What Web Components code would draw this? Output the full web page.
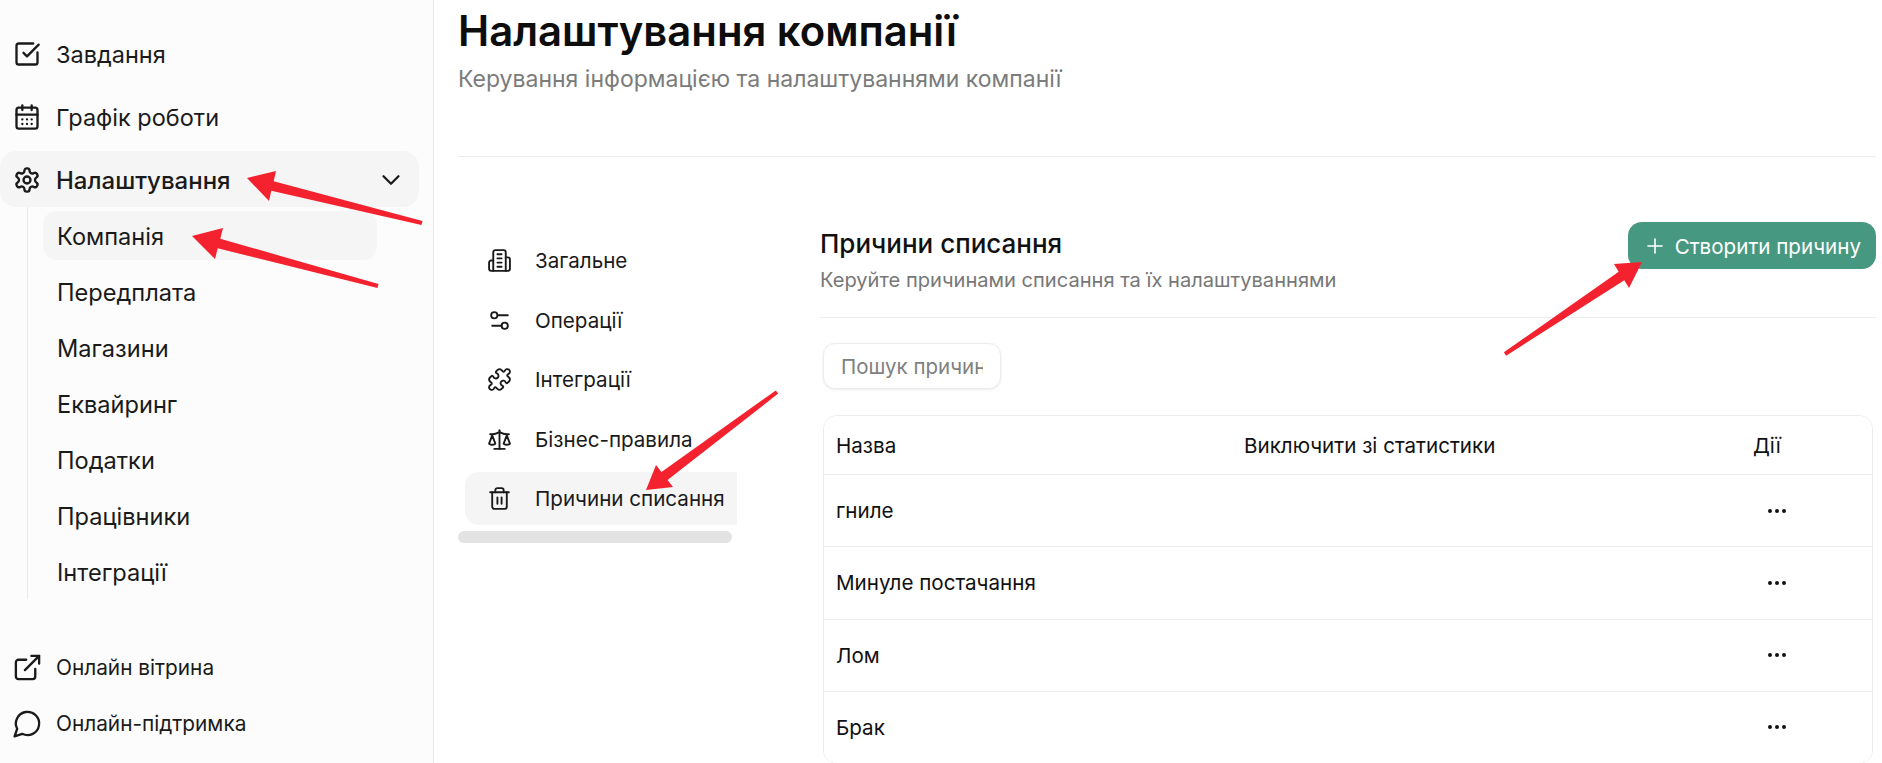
<!DOCTYPE html>
<html lang="uk">
<head>
<meta charset="utf-8">
<title>Налаштування компанії</title>
<style>
  html, body { margin: 0; height: 763px; overflow: hidden; background: #fff; }
  body { font-family: Inter, "Noto Sans", sans-serif; color: #111; }
</style>
</head>
<body>
<settings-page>
  <side-nav slot="side">
    <nav-item icon="check">Завдання</nav-item>
    <nav-item icon="calendar">Графік роботи</nav-item>
    <nav-item icon="gear" active>Налаштування</nav-item>
    <nav-group>
      <sub-item active>Компанія</sub-item>
      <sub-item>Передплата</sub-item>
      <sub-item>Магазини</sub-item>
      <sub-item>Еквайринг</sub-item>
      <sub-item>Податки</sub-item>
      <sub-item>Працівники</sub-item>
      <sub-item>Інтеграції</sub-item>
    </nav-group>
    <nav-item slot="bottom" icon="link" small>Онлайн вітрина</nav-item>
    <nav-item slot="bottom" icon="chat" small>Онлайн-підтримка</nav-item>
  </side-nav>

  <page-header slot="head" subtitle="Керування інформацією та налаштуваннями компанії">Налаштування компанії</page-header>

  <settings-tabs slot="tabs">
    <tab-item icon="building">Загальне</tab-item>
    <tab-item icon="sliders">Операції</tab-item>
    <tab-item icon="puzzle">Інтеграції</tab-item>
    <tab-item icon="scale">Бізнес-правила</tab-item>
    <tab-item icon="trash" active>Причини списання</tab-item>
  </settings-tabs>

  <reasons-panel slot="panel">
    <reason-row head>
      <span>Назва</span><span slot="flag">Виключити зі статистики</span><span slot="act">Дії</span>
    </reason-row>
    <reason-row><span>гниле</span></reason-row>
    <reason-row><span>Минуле постачання</span></reason-row>
    <reason-row><span>Лом</span></reason-row>
    <reason-row last><span>Брак</span></reason-row>
  </reasons-panel>
</settings-page>
<arrow-layer></arrow-layer>

<script>
const ICONS = {
  check: '<path d="M21 10.656V19a2 2 0 0 1-2 2H5a2 2 0 0 1-2-2V5a2 2 0 0 1 2-2h12.344"/><path d="m9 11 3 3L22 4"/>',
  calendar: '<path d="M8 2v4M16 2v4"/><rect x="3" y="4" width="18" height="18" rx="2"/><path d="M3 10h18M8 14h.01M12 14h.01M16 14h.01M8 18h.01M12 18h.01M16 18h.01"/>',
  gear: '<path d="M12.22 2h-.44a2 2 0 0 0-2 2v.18a2 2 0 0 1-1 1.73l-.43.25a2 2 0 0 1-2 0l-.15-.08a2 2 0 0 0-2.73.73l-.22.38a2 2 0 0 0 .73 2.73l.15.1a2 2 0 0 1 1 1.72v.51a2 2 0 0 1-1 1.74l-.15.09a2 2 0 0 0-.73 2.73l.22.38a2 2 0 0 0 2.73.73l.15-.08a2 2 0 0 1 2 0l.43.25a2 2 0 0 1 1 1.73V20a2 2 0 0 0 2 2h.44a2 2 0 0 0 2-2v-.18a2 2 0 0 1 1-1.73l.43-.25a2 2 0 0 1 2 0l.15.08a2 2 0 0 0 2.73-.73l.22-.39a2 2 0 0 0-.73-2.73l-.15-.08a2 2 0 0 1-1-1.74v-.5a2 2 0 0 1 1-1.74l.15-.09a2 2 0 0 0 .73-2.73l-.22-.38a2 2 0 0 0-2.73-.73l-.15.08a2 2 0 0 1-2 0l-.43-.25a2 2 0 0 1-1-1.73V4a2 2 0 0 0-2-2z"/><circle cx="12" cy="12" r="3"/>',
  link: '<path d="M18 13v6a2 2 0 0 1-2 2H5a2 2 0 0 1-2-2V8a2 2 0 0 1 2-2h6"/><path d="M15 3h6v6"/><path d="M10 14 21 3"/>',
  chat: '<path d="M7.9 20A9 9 0 1 0 4 16.1L2 22Z"/>',
  chevron: '<path d="m6 9 6 6 6-6"/>',
  building: '<path d="M6 22V4a2 2 0 0 1 2-2h8a2 2 0 0 1 2 2v18Z"/><path d="M6 12H4a2 2 0 0 0-2 2v6a2 2 0 0 0 2 2h2"/><path d="M18 9h2a2 2 0 0 1 2 2v9a2 2 0 0 1-2 2h-2"/><path d="M10 6h4M10 10h4M10 14h4M10 18h4"/>',
  sliders: '<path d="M20 7h-9"/><path d="M14 17H5"/><circle cx="17" cy="17" r="3"/><circle cx="7" cy="7" r="3"/>',
  puzzle: '<path d="M19.439 7.85c-.049.322.059.648.289.878l1.568 1.568c.47.47.706 1.087.706 1.704s-.235 1.233-.706 1.704l-1.611 1.611a.98.98 0 0 1-.837.276c-.47-.07-.802-.48-.968-.925a2.501 2.501 0 1 0-3.214 3.214c.446.166.855.497.925.968a.979.979 0 0 1-.276.837l-1.61 1.61a2.404 2.404 0 0 1-1.705.707 2.402 2.402 0 0 1-1.704-.706l-1.568-1.568a1.026 1.026 0 0 0-.877-.29c-.493.074-.84.504-1.02.968a2.5 2.5 0 1 1-3.237-3.237c.464-.18.894-.527.967-1.02a1.026 1.026 0 0 0-.289-.877l-1.568-1.568A2.402 2.402 0 0 1 1.998 12c0-.617.236-1.234.706-1.704L4.23 8.77c.24-.24.581-.353.917-.303.515.077.877.528 1.073 1.01a2.5 2.5 0 1 0 3.259-3.259c-.482-.196-.933-.558-1.01-1.073-.05-.336.062-.676.303-.917l1.525-1.525A2.402 2.402 0 0 1 12 1.998c.617 0 1.234.236 1.704.706l1.568 1.568c.23.23.556.338.877.29.493-.074.84-.504 1.02-.968a2.5 2.5 0 1 1 3.237 3.237c-.464.18-.894.527-.967 1.02Z"/>',
  scale: '<path d="m16 16 3-8 3 8c-.87.65-1.92 1-3 1s-2.13-.35-3-1Z"/><path d="m2 16 3-8 3 8c-.87.65-1.92 1-3 1s-2.13-.35-3-1Z"/><path d="M7 21h10"/><path d="M12 3v18"/><path d="M3 7h2c2 0 5-1 7-2 2 1 5 2 7 2h2"/>',
  trash: '<path d="M3 6h18"/><path d="M19 6v14c0 1-1 2-2 2H7c-1 0-2-1-2-2V6"/><path d="M8 6V4c0-1 1-2 2-2h4c1 0 2 1 2 2v2"/><path d="M10 11v6M14 11v6"/>',
  plus: '<path d="M5 12h14"/><path d="M12 5v14"/>',
  dots: '<circle cx="12" cy="12" r="1"/><circle cx="19" cy="12" r="1"/><circle cx="5" cy="12" r="1"/>'
}

function icon(name, size, width) {
  return `<svg xmlns="http://www.w3.org/2000/svg" width="${size}" height="${size}" viewBox="0 0 24 24" fill="none" stroke="currentColor" stroke-width="${width || 2}" stroke-linecap="round" stroke-linejoin="round" style="flex:none;display:block">${ICONS[name]}</svg>`
}

// small helper, every element below is just markup + style in an open root
function define(tag, render) {
  customElements.define(tag, class extends HTMLElement {
    constructor() {
      super()
      this.attachShadow({mode: 'open'})
    }
    connectedCallback() {
      this.shadowRoot.innerHTML = render(this)
    }
  })
}

define('settings-page', () => `
  <style>
    :host { display: grid; grid-template-columns: 434px 1fr; height: 763px; overflow: hidden; }
    .main { padding: 0 6px 0 24px; min-width: 0; }
    .body { display: flex; padding-top: 65px; }
    .tabs { width: 362px; flex: none; }
    .panel { flex: 1; min-width: 0; }
  </style>
  <slot name="side"></slot>
  <div class="main">
    <slot name="head"></slot>
    <div class="body">
      <div class="tabs"><slot name="tabs"></slot></div>
      <div class="panel"><slot name="panel"></slot></div>
    </div>
  </div>
`)

define('side-nav', () => `
  <style>
    :host { display: flex; flex-direction: column; height: 763px; box-sizing: border-box; padding-top: 25px; background: #fcfcfc; border-right: 1px solid #e9e9e9; }
    .top { display: flex; flex-direction: column; }
    .bottom { display: flex; flex-direction: column; margin-top: 39px; }
  </style>
  <div class="top"><slot></slot></div>
  <div class="bottom"><slot name="bottom"></slot></div>
`)

define('nav-item', el => {
  const active = el.hasAttribute('active')
  const small = el.hasAttribute('small')
  return `
  <style>
    :host { display: flex; align-items: center; gap: ${small ? 13 : 15}px; width: 419px; box-sizing: border-box; padding: 2px 0 0 ${small ? 12 : 13}px;
      height: 56px; margin-bottom: ${active || small ? 0 : 7}px; border-radius: 16px;
      font-size: ${small ? 20.8 : active ? 24 : 23.5}px; font-weight: ${active ? 500 : 400}; color: #1a1a1a;
      background: ${active ? '#f5f5f5' : 'transparent'}; }
    .chev { margin-left: auto; margin-right: 13px; }
  </style>
  ${small ? icon(el.getAttribute('icon'), 31, 1.8) : icon(el.getAttribute('icon'), 28)}
  <slot></slot>
  ${active ? '<span class="chev">' + icon('chevron', 30, 1.8) + '</span>' : ''}`
})

define('nav-group', () => `
  <style>
    :host { display: flex; flex-direction: column; margin-left: 27px; padding: 4px 0 0 15px; height: 392px; box-sizing: border-box; border-left: 1px solid #e9e9e9; }
  </style>
  <slot></slot>
`)

define('sub-item', el => `
  <style>
    :host { display: flex; align-items: center; flex: none; width: 334px; height: 49px; margin-bottom: 7px; padding: 2px 0 0 14px; box-sizing: border-box;
      border-radius: 14px; font-size: 23.6px; color: #1a1a1a; background: ${el.hasAttribute('active') ? '#f5f5f5' : 'transparent'}; }
  </style>
  <slot></slot>
`)

define('page-header', el => `
  <style>
    :host { display: block; height: 157px; box-sizing: border-box; border-bottom: 1px solid #ececec; }
    h1 { margin: 0; padding-top: 6px; font-size: 41.8px; line-height: 50px; font-weight: 600; color: #0d0d0d; }
    p { margin: 0; padding-top: 8px; font-size: 23px; line-height: 30px; color: #7b7b7b; }
  </style>
  <h1><slot></slot></h1>
  <p>${el.getAttribute('subtitle')}</p>
`)

define('settings-tabs', () => `
  <style>
    :host { display: flex; flex-direction: column; width: 279px; }
    .list { display: flex; flex-direction: column; padding-left: 7px; padding-top: 9px; }
    .bar { width: 274px; height: 12px; margin-top: 6px; border-radius: 6px; background: #e3e3e3; }
  </style>
  <div class="list"><slot></slot></div>
  <div class="bar"></div>
`)

define('tab-item', el => {
  const active = el.hasAttribute('active')
  return `
  <style>
    :host { display: flex; align-items: center; gap: 23px; height: ${active ? 53 : 59.6}px; margin-top: ${active ? 3 : 0}px; padding-left: 22px; box-sizing: border-box;
      border-radius: 14px 0 0 14px; font-size: 20.6px; white-space: nowrap; overflow: hidden; color: #1a1a1a; background: ${active ? '#f5f5f5' : 'transparent'}; }
  </style>
  ${icon(el.getAttribute('icon'), 25, 1.8)}
  <slot></slot>`
})

define('reasons-panel', () => `
  <style>
    :host { display: block; }
    .top { display: flex; justify-content: space-between; align-items: flex-start; height: 95px; border-bottom: 1px solid #ececec; }
    h2 { margin: 0; font-size: 26px; line-height: 44px; font-weight: 500; color: #111; }
    p { margin: 0; font-size: 20.1px; line-height: 28px; color: #777; }
    .btn { display: flex; align-items: center; gap: 8px; height: 47px; box-sizing: border-box; padding: 0 15px; border-radius: 14px; background: #479880; color: #fff; font-size: 20.6px; }
    .btn span { padding-top: 1px; }
    .search { width: 178px; height: 46px; box-sizing: border-box; margin: 25px 0 26px 3px; padding: 0 17px; display: flex; align-items: center; border: 1px solid #ececec; border-radius: 12px; box-shadow: 0 1px 3px rgba(0,0,0,.08); background: #fff; }
    .search span { font-size: 20.5px; color: #808080; white-space: nowrap; overflow: hidden; }
    .table { margin: 0 3px; border: 1px solid #ececec; border-radius: 14px; overflow: hidden; }
  </style>
  <div class="top">
    <div><h2>Причини списання</h2><p>Керуйте причинами списання та їх налаштуваннями</p></div>
    <div class="btn">${icon('plus', 24, 1.6)}<span>Створити причину</span></div>
  </div>
  <div class="search"><span>Пошук причин</span></div>
  <div class="table"><slot></slot></div>
`)

define('reason-row', el => {
  const head = el.hasAttribute('head')
  const last = el.hasAttribute('last')
  return `
  <style>
    :host { display: grid; grid-template-columns: 408px 509px 1fr; align-items: center; height: ${head ? 59 : last ? 71 : 72.3}px; box-sizing: border-box; padding-left: 12px;
      border-bottom: ${last ? 0 : 1}px solid #ececec; font-size: 20.6px; color: #111; background: #fff; }
    .act { display: flex; padding-left: ${head ? 0 : 12}px; }
  </style>
  <div><slot></slot></div>
  <div><slot name="flag"></slot></div>
  <div class="act"><slot name="act">${head ? '' : icon('dots', 24, 2)}</slot></div>`
})

// the red marks drawn on top of the screenshot
const ARROWS = [
  {tail: [422, 223], tip: [247, 178], a: [276, 171], b: [269, 201]},
  {tail: [378, 286], tip: [192, 236], a: [223, 228], b: [215, 259]},
  {tail: [777, 392], tip: [646, 490], a: [656, 465], b: [673, 487]},
  {tail: [1505, 354], tip: [1642, 262], a: [1614, 264], b: [1629, 288]}
]

function arrowPoints({tail, tip, a, b}) {
  const dx = tip[0] - tail[0], dy = tip[1] - tail[1]
  const len = Math.hypot(dx, dy)
  const nx = -dy / len, ny = dx / len
  const neck = [(a[0] + b[0]) / 2, (a[1] + b[1]) / 2]
  const at = (p, w) => [p[0] + nx * w, p[1] + ny * w]
  const side = (a[0] - neck[0]) * nx + (a[1] - neck[1]) * ny > 0 ? 1 : -1
  const pts = [tip, a, at(neck, 5 * side), at(tail, 2 * side), at(tail, -2 * side), at(neck, -5 * side), b]
  return pts.map(p => p[0].toFixed(1) + ',' + p[1].toFixed(1)).join(' ')
}

define('arrow-layer', () => `
  <style>
    :host { position: absolute; inset: 0; display: block; pointer-events: none; }
    svg { display: block; }
  </style>
  <svg width="1882" height="763" viewBox="0 0 1882 763">
    ${ARROWS.map(x => `<polygon points="${arrowPoints(x)}" fill="#f4222f"/>`).join('')}
  </svg>
`)
</script>
</body>
</html>
